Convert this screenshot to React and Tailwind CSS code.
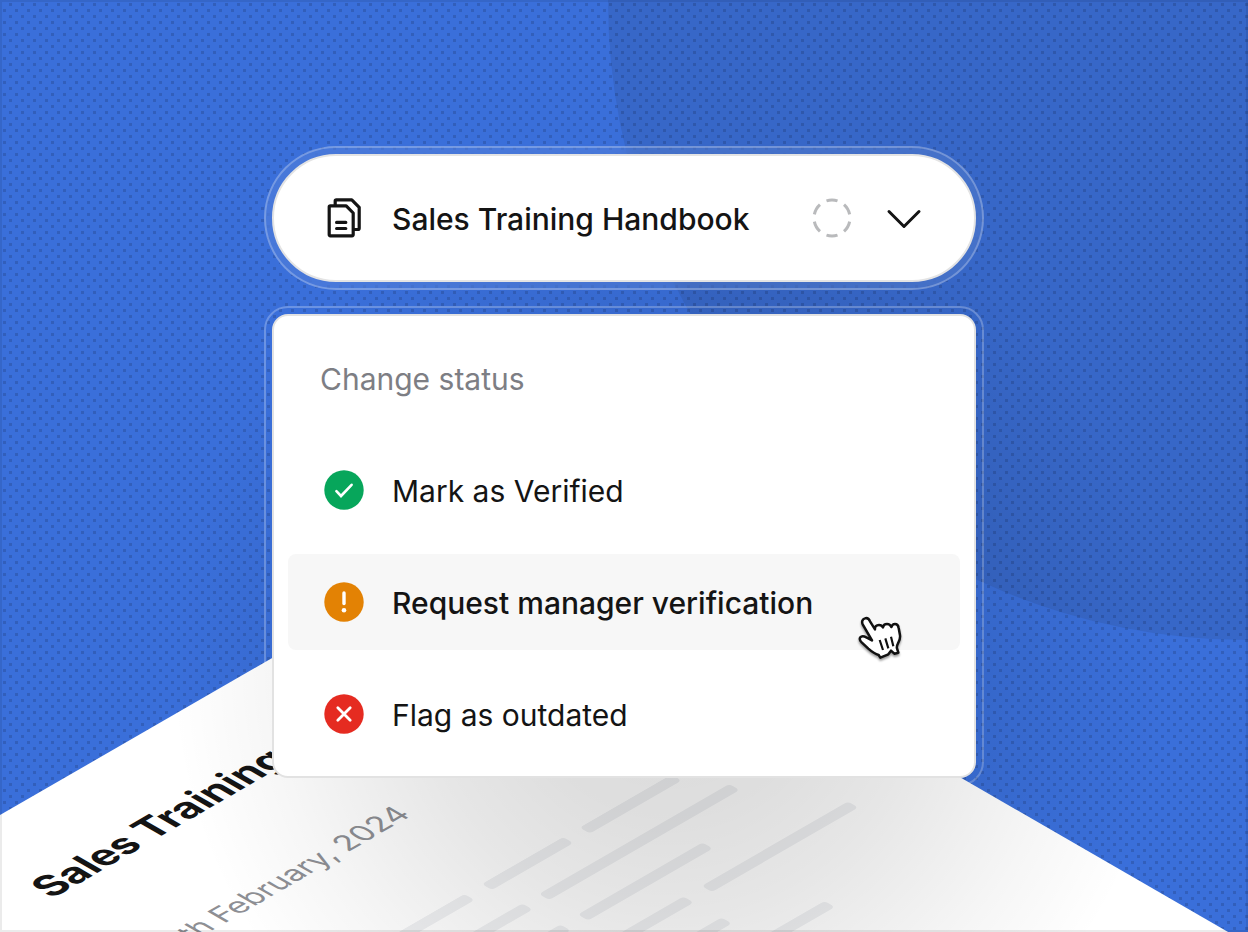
import React, { useState } from 'react';

const rows = [
  [[120, 277], [417, 94], [530, 106]],
  [[120, 301], [440, 220]],
  [[120, 302], [442, 144]],
  [[120, 401], [542, 169]],
  [[120, 402]],
  [[420, 178]],
];

const FilesIcon = () => (
  <svg className="h-10 w-10 shrink-0" viewBox="324 198 40 40" fill="none" stroke="#141414" strokeWidth="3.2" strokeLinecap="round" strokeLinejoin="round" aria-hidden="true">
    <path d="M335.2 205.5v-4.4a1.2 1.2 0 0 1 1.2-1.2h15.4l7.4 7.4v21a1.2 1.2 0 0 1-1.2 1.2h-4" />
    <path d="M330.4 205.8h15.8l7 7.2v21.6a1.2 1.2 0 0 1-1.2 1.2h-21.6a1.2 1.2 0 0 1-1.2-1.2v-27.6a1.2 1.2 0 0 1 1.2-1.2z" />
    <path d="M336.6 222.4h9.2M336.6 228.5h9.2" />
  </svg>
);

const VerifiedIcon = () => (
  <svg className="h-10 w-10 shrink-0" viewBox="0 0 40 40" fill="none" aria-hidden="true">
    <circle cx="20" cy="20" r="19.7" fill="#07a65b" />
    <path d="M12.4 21.2l4.6 4.8L27.6 14.8" stroke="#fff" strokeWidth="2.6" strokeLinecap="round" />
  </svg>
);

const RequestIcon = () => (
  <svg className="h-10 w-10 shrink-0" viewBox="0 0 40 40" fill="none" aria-hidden="true">
    <circle cx="20" cy="20" r="19.7" fill="#e38204" />
    <path d="M20 11v10.6" stroke="#fff" strokeWidth="3.4" strokeLinecap="round" />
    <circle cx="20" cy="28.2" r="2.3" fill="#fff" />
  </svg>
);

const OutdatedIcon = () => (
  <svg className="h-10 w-10 shrink-0" viewBox="0 0 40 40" fill="none" aria-hidden="true">
    <circle cx="20" cy="20" r="19.7" fill="#e52b21" />
    <path d="M13.8 13.8l12.4 12.4M26.2 13.8L13.8 26.2" stroke="#fff" strokeWidth="2.8" strokeLinecap="round" />
  </svg>
);

const HandCursor = () => (
  <svg className="h-12 w-12 drop-shadow-[0_2px_1px_rgba(0,0,0,0.4)]" viewBox="48 72 144 144" aria-hidden="true">
    <path
      d="M68 103c-4-9 0-16 7-18 6-2 12 2 15 9l15 24c-1-8 4-13 12-13 6 0 10 3 12 7 1-6 6-10 12-10 7 0 11 4 13 9 2-6 6-9 11-9 7 0 10 5 11 12l4 22c1 8-1 15-5 22-3 6-6 10-4 17l4 13-12 3-10-9-8 11-24 10-5-8c-12-3-22-11-31-19l-20-19c-5-5-7-11-4-15 4-5 11-4 18 0l17 9z"
      fill="#fff"
      stroke="#111"
      strokeWidth="7.5"
      strokeLinejoin="round"
    />
    <path d="M119 150l10 30M136 145l9 30M153 140l7 29" stroke="#111" strokeWidth="6.5" />
  </svg>
);

const options = [
  { name: 'Mark as Verified', icon: VerifiedIcon },
  { name: 'Request manager verification', icon: RequestIcon },
  { name: 'Flag as outdated', icon: OutdatedIcon },
];

// Isometric sheet lying under the menu
const HandbookPage = () => (
  <div className="absolute top-[919px] left-[-180px] z-10 h-[1200px] w-[800px] origin-top-left bg-white [transform:matrix(0.866,-0.5,0.866,0.5,0,0)]">
    <h2 className="absolute top-[72px] left-[154px] text-[40px] leading-[56px] font-bold whitespace-nowrap text-[#141414]">
      Sales Training Handbook
    </h2>
    <p className="absolute top-[205px] left-[162px] text-[30px] leading-[44px] whitespace-nowrap text-[#8e8f94]">
      12th February, 2024
    </p>
    <svg className="absolute top-[347px] left-0 h-[240px] w-full" fill="#eff0f2" aria-hidden="true">
      {rows.map((row, i) =>
        row.map(([x, w]) => <rect key={`${i}-${x}`} x={x} y={i * 43} width={w} height="12" rx="4" />)
      )}
    </svg>
  </div>
);

const App = () => {
  const [open, setOpen] = useState(true);
  const [active, setActive] = useState(1);

  return (
    <main className="relative isolate flex min-h-screen flex-col items-center overflow-hidden bg-[#3a6fda] px-4 pt-[146px] pb-36 font-['Inter','Liberation_Sans',sans-serif] text-[#141414]">
      {/* Backdrop */}
      <div className="absolute top-[-640px] right-[-640px] -z-10 h-[1280px] w-[1280px] rounded-full bg-[#3767c8]" />
      <svg className="absolute inset-0 -z-10 h-full w-full" aria-hidden="true">
        <pattern id="dots" width="12" height="12" patternUnits="userSpaceOnUse">
          <path d="M9 3h3v3h-3zM3 9h3v3h-3z" fill="#000" fillOpacity="0.14" />
        </pattern>
        <rect width="100%" height="100%" fill="url(#dots)" />
      </svg>

      <HandbookPage />

      <div className="relative z-20 w-full max-w-[720px] rounded-full border-2 border-white/25 bg-white/8 p-1.5 backdrop-blur-sm">
        <button
          type="button"
          aria-expanded={open}
          onClick={() => setOpen(!open)}
          className="flex h-32 w-full items-center rounded-full border-2 border-[#e4e4e4] bg-white px-[50px]"
        >
          <FilesIcon />
          <span className="ml-7 flex-1 pt-0.5 text-left text-[30px] leading-10 font-medium">Sales Training Handbook</span>
          <svg className="mr-8 h-10 w-10" viewBox="0 0 40 40" fill="none" aria-hidden="true">
            <circle cx="20" cy="20" r="18" stroke="#b9babc" strokeWidth="3" pathLength="360" strokeDasharray="36 24" strokeDashoffset="-12" />
          </svg>
          <svg className="h-10 w-10" viewBox="0 0 40 40" fill="none" stroke="#141414" strokeWidth="3" strokeLinecap="round" strokeLinejoin="round" aria-hidden="true">
            <path d="M5 13.5l15 15 15-15" />
          </svg>
        </button>
      </div>

      {open && (
        <div className="relative mt-4 w-full max-w-[720px] rounded-3xl border-2 border-white/25 p-1.5">
          {/* Soft round shadow under the menu */}
          <div className="pointer-events-none absolute -top-36 -left-24 z-10 h-[1000px] w-[1000px] rounded-full bg-[radial-gradient(closest-side,rgba(0,0,0,0.14),rgba(0,0,0,0.13)_30%,rgba(0,0,0,0.098)_50%,rgba(0,0,0,0.035)_80%,transparent)]" />
          <div className="relative z-20 flex flex-col gap-4 rounded-2xl border-2 border-[#e2e2e2] bg-white p-3.5">
            <h3 className="flex h-24 items-center pt-0.5 pl-8 text-[30px] leading-10 text-[#7d7e84]">Change status</h3>
            {options.map((option, i) => (
              <button
                key={option.name}
                type="button"
                onMouseEnter={() => setActive(i)}
                className={`relative flex h-24 items-center gap-7 rounded-lg pl-9 text-left text-[30px] leading-10 ${active === i ? 'bg-[#f7f7f7] font-medium' : ''}`}
              >
                <option.icon />
                <span className="pt-0.5">{option.name}</span>
                {active === i && (
                  <span className="absolute top-[60px] right-14">
                    <HandCursor />
                  </span>
                )}
              </button>
            ))}
          </div>
        </div>
      )}

      <div className="pointer-events-none absolute inset-0 z-30 border-2 border-black/8" />
    </main>
  );
};

export default App;
